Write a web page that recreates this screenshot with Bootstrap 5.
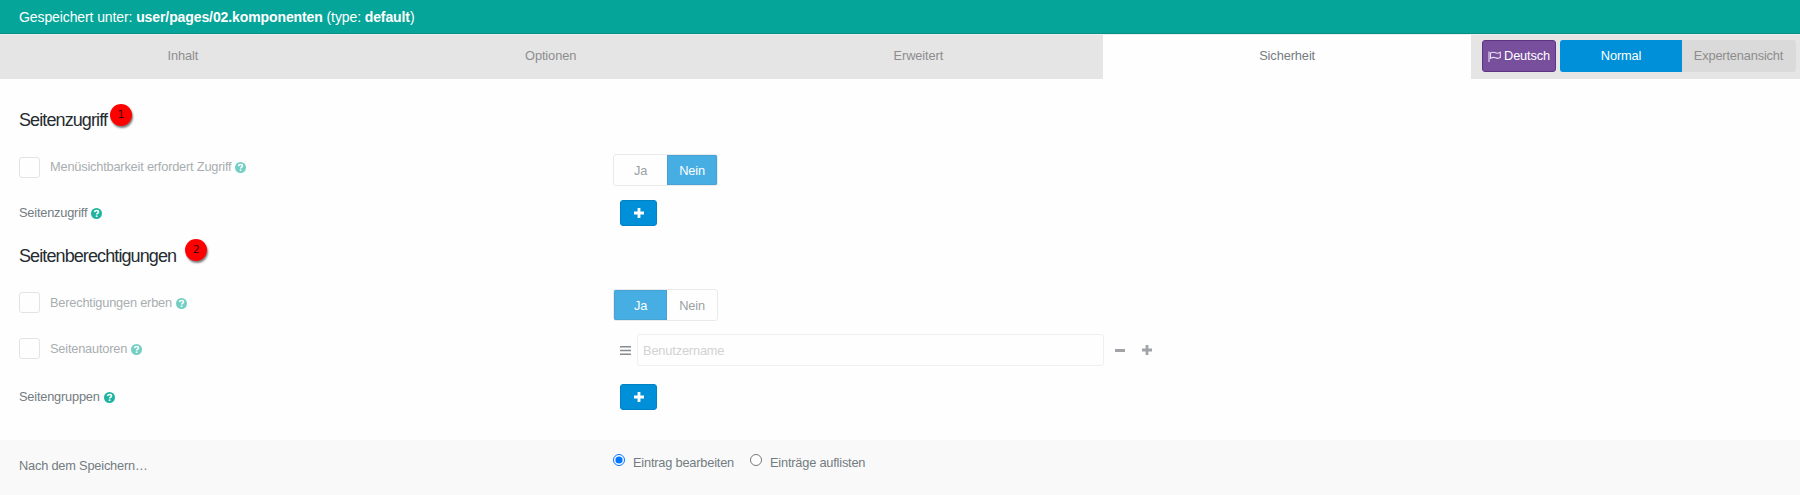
<!DOCTYPE html>
<html lang="de">
<head>
<meta charset="utf-8">
<meta name="viewport" content="width=device-width, initial-scale=1">
<title>Seite bearbeiten</title>
<link href="https://cdn.jsdelivr.net/npm/bootstrap@5.3.0/dist/css/bootstrap.min.css" rel="stylesheet">
<script src="https://cdn.jsdelivr.net/npm/bootstrap@5.3.0/dist/js/bootstrap.bundle.min.js" defer></script>
<style>
body{font-family:"Liberation Sans",Arial,sans-serif;font-size:12.8px;letter-spacing:-.2px;line-height:18px;color:#737c81;background:#fefefe;overflow:hidden}
.notice{height:34px;background:#06a599;border-bottom:1px solid #0b8f85;color:#fff;font-size:14px;letter-spacing:-.1px;padding-left:19px}
.tabbar{height:45px;background:#e5e5e5;border-top:1px solid #eee}
.tabbar .nav-link{width:367.75px;height:100%;border-radius:0;color:#8d8d8d;padding:0 2px 0 0;text-align:center;line-height:42px;letter-spacing:-.1px}
.tabbar .nav-link.active{background:#fefefe;color:#737c81;padding:0}
.tools{padding-left:11px;padding-top:5px}
.btn{--bs-btn-font-size:12.8px;--bs-btn-line-height:18px;--bs-btn-padding-x:0;--bs-btn-padding-y:0;letter-spacing:-.16px}
.lang-btn{width:74px;height:32px;background:#774f9d;border:1px solid #5b3583;color:#fff;margin-right:4px;border-radius:3px}
.flag{margin-right:3px}
.mode-group{width:236px;height:32px;border-radius:3px;background:#dadada}
.mode-group .btn{border:0;color:#8d8d8d;border-radius:0;line-height:32px}
.mode-group .btn.active{background:#0090d9;color:#fff;flex:0 0 122px;border-radius:3px 0 0 3px}
.form-area{padding-top:16px;height:361px}
.section-head{height:48px;padding:14px 0 0 19px;font-size:18px;line-height:22px;letter-spacing:-.9px;color:#252c31;margin:0;font-weight:400}
.section-head.second{height:42px;padding-top:9px}
.pin{width:22px;height:22px;border-radius:50%;background:#f00;box-shadow:1px 2px 2px rgba(0,0,0,.5);color:#3d0000;font:11px/22px "DejaVu Sans",sans-serif;letter-spacing:0;text-align:center;margin:-5px 0 0 3px}
.second .pin{margin:-6px 0 0 9px}
.field-row{height:47px;display:grid;grid-template-columns:613px 1fr;align-items:start}
.field-label{padding:15px 0 0 19px;white-space:nowrap}
.field-box{padding-top:11px}
.dim{opacity:.62;padding-top:14px}
.dim>span:last-child{margin-top:1px}
.second~.field-row .dim>span:last-child{margin-top:2px}
.tick{width:21px;height:21px;border:1px solid #d3d3d3;border-radius:3px;margin-right:10px;background:#fff}
.toggle{width:105px;height:32px;border:1px solid #e3e3e3;border-radius:3px;background:#fff;opacity:.72;vertical-align:top}
.toggle .btn{color:#737c81;border:0;border-radius:0;width:53px;line-height:31px;flex:none}
.toggle .btn.active{background:#0090d9;color:#fff;box-shadow:inset 0 0 0 1px #0082c4}
.toggle .btn:last-child{width:50px;margin-left:0!important;border-radius:0 2px 2px 0}
.toggle .btn:first-child.active{border-radius:2px 0 0 2px}
.add-btn{width:37px;height:26px;background:#0090d9;border:1px solid #0082c4;border-radius:3px;margin-left:7px;display:flex;align-items:center;justify-content:center}
.grip{margin-left:7px}
.user-input{width:467px;height:32px;border:1px solid #efefef;border-radius:3px;padding:0 5px;font-size:12.8px;letter-spacing:-.16px;background:#fefefe;margin-left:6px}
.user-input::placeholder{color:#d2d2d2}
.gray-icon{color:#a0a4a8}
.row-page{height:46px}
.row-page .field-label{padding-top:14px}
.row-page .field-box{padding-top:10px}
.row-authors{height:48px}
.row-authors .dim{padding-top:13px}
.row-authors .field-box{padding-top:9px}
.q{width:11px;height:11px;margin-left:4px;vertical-align:-1.5px!important}
.save-row{height:55px;background:#f9f9f9;display:grid;grid-template-columns:613px 1fr}
.save-row .field-label{padding-top:17px}
.radios{padding-top:14px}
.radios input{margin:0 8px 0 0;width:12px;height:12px}
.radios label+label{margin-left:16px}
</style>
</head>
<body>
<svg class="d-none"><defs>
<symbol id="help" viewBox="0 0 12 12"><circle cx="6" cy="6" r="6" fill="#1fb3a0"/><path d="M3.800 4.500C4 3.200 5 2.700 6.100 2.700c1.200 0 2.100.700 2.100 1.700 0 1.500-2 1.500-2 2.700" fill="none" stroke="#fff" stroke-width="1.700"/><rect x="5.200" y="8.100" width="1.800" height="1.700" fill="#fff"/></symbol>
<symbol id="plus" viewBox="0 0 10 10"><path d="M3.600 0h2.800v3.600H10v2.800H6.400V10H3.600V6.400H0V3.600h3.600z" fill="currentColor"/></symbol>
</defs></svg>
<div class="notice d-flex align-items-center"><div>Gespeichert unter: <b>user/pages/02.komponenten</b> (type: <b>default</b>)</div></div>
<div class="tabbar d-flex">
  <nav class="nav nav-pills flex-nowrap h-100">
    <a class="nav-link">Inhalt</a><a class="nav-link">Optionen</a><a class="nav-link">Erweitert</a><a class="nav-link active">Sicherheit</a>
  </nav>
  <div class="tools d-flex">
    <button class="btn lang-btn d-flex align-items-center justify-content-center"><svg class="flag" width="13" height="11" viewBox="0 0 13 11" fill="none" stroke="#eadff5" stroke-width="1.100"><path d="M1 .500V11M2.500 2C4.500.800 6 1 7.500 1.800S10.500 2.200 12.300 1.300V6.600C10.500 7.600 9 7.600 7.500 6.800S4.500 6.200 2.500 7.400z"/></svg>Deutsch</button>
    <div class="btn-group mode-group"><button class="btn active">Normal</button><button class="btn">Expertenansicht</button></div>
  </div>
</div>
<main class="form-area">
  <h2 class="section-head d-flex">Seitenzugriff<span class="pin">1</span></h2>
  <div class="field-row">
    <div class="field-label dim d-flex"><span class="tick"></span><span>Menüsichtbarkeit erfordert Zugriff<svg class="q"><use href="#help"/></svg></span></div>
    <div class="field-box"><div class="btn-group toggle"><button class="btn">Ja</button><button class="btn active">Nein</button></div></div>
  </div>
  <div class="field-row row-page">
    <div class="field-label">Seitenzugriff<svg class="q"><use href="#help"/></svg></div>
    <div class="field-box"><button class="btn add-btn text-white"><svg width="10" height="10"><use href="#plus"/></svg></button></div>
  </div>
  <h2 class="section-head second d-flex">Seitenberechtigungen<span class="pin">2</span></h2>
  <div class="field-row">
    <div class="field-label dim d-flex"><span class="tick"></span><span>Berechtigungen erben<svg class="q"><use href="#help"/></svg></span></div>
    <div class="field-box"><div class="btn-group toggle"><button class="btn active">Ja</button><button class="btn">Nein</button></div></div>
  </div>
  <div class="field-row row-authors">
    <div class="field-label dim d-flex"><span class="tick"></span><span>Seitenautoren<svg class="q"><use href="#help"/></svg></span></div>
    <div class="field-box d-flex align-items-center">
      <svg class="grip" width="11" height="9" viewBox="0 0 11 9"><path d="M0 .750h11M0 4.500h11M0 8.200h11" stroke="#868b90" stroke-width="1.500"/></svg>
      <input class="form-control user-input" placeholder="Benutzername">
      <svg class="gray-icon" width="10" height="3" style="margin-left:11px"><rect width="10" height="3" fill="currentColor"/></svg>
      <svg class="gray-icon" width="10" height="10" style="margin-left:17px"><use href="#plus"/></svg>
    </div>
  </div>
  <div class="field-row">
    <div class="field-label">Seitengruppen<svg class="q"><use href="#help"/></svg></div>
    <div class="field-box"><button class="btn add-btn text-white"><svg width="10" height="10"><use href="#plus"/></svg></button></div>
  </div>
</main>
<footer class="save-row">
  <div class="field-label">Nach dem Speichern…</div>
  <div class="radios d-flex">
    <label class="d-flex"><input type="radio" name="after" checked><span>Eintrag bearbeiten</span></label>
    <label class="d-flex"><input type="radio" name="after"><span>Einträge auflisten</span></label>
  </div>
</footer>
</body>
</html>
